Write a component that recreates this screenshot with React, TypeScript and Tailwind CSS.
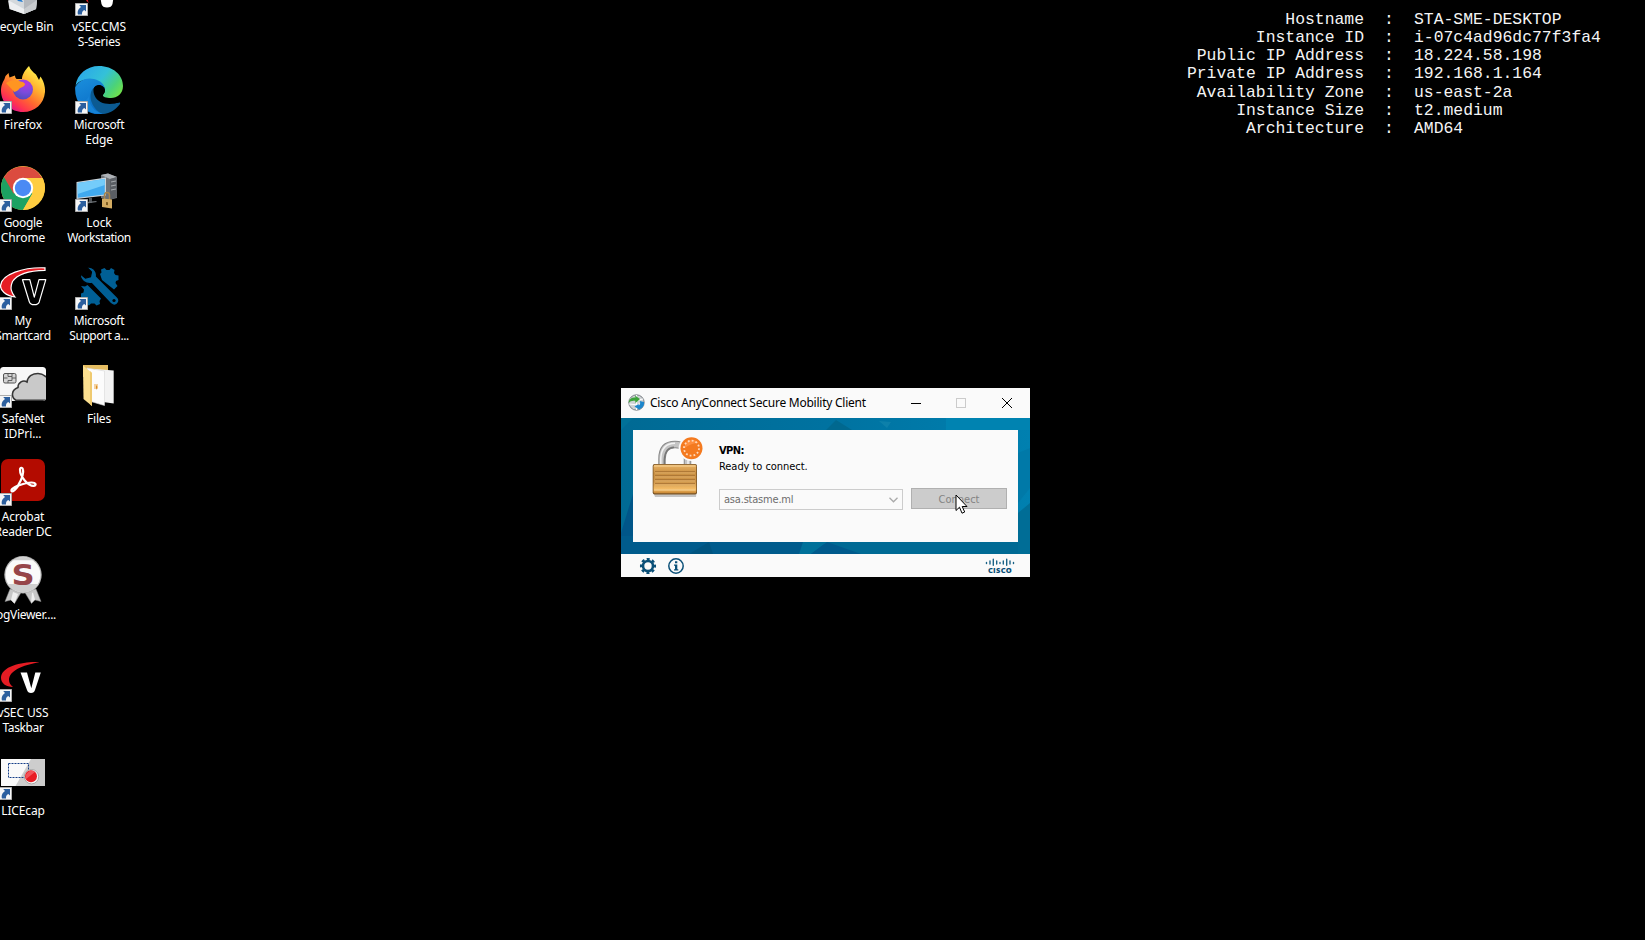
import type { ReactNode } from "react";

const uiFont = "font-['Noto_Sans','Open_Sans',sans-serif]";
const tahoma = "font-['DejaVu_Sans_Condensed','DejaVu_Sans',sans-serif]";

function Glyph({ children }: { children: ReactNode }) {
  return (
    <svg viewBox="0 0 48 48" className="block size-12">
      {children}
    </svg>
  );
}

function ShortcutArrow() {
  return (
    <svg viewBox="0 0 13 13" className="absolute bottom-0 left-0 size-[13px]">
      <rect width="13" height="13" fill="#8f8f8f" />
      <rect x="0.7" y="0.7" width="11.6" height="11.6" fill="#f6f6f6" />
      <path d="M4.200 2h6.800v6.600L9.300 7C7.500 8 6.800 9.200 7 11.600H3C2 8.400 3.500 5.600 6 4z" fill="#2c5f9e" />
    </svg>
  );
}

function RecycleBin() {
  return (
    <Glyph>
      <path d="M7 4h34l-4 37-12 5-14-5z" fill="#d3d8dc" />
      <path d="M25 10l16-5-4 36-12 5z" fill="#b4b8bd" />
      <path d="M9 32l16 9v5L10.500 41z" fill="#eceef0" />
      <path d="M25 41l13-9-1 9-12 5z" fill="#c9cccf" />
      <path d="M15 28l6 2 3 4-5-1z" fill="#1c78d0" />
    </Glyph>
  );
}

function VsecSeries() {
  return (
    <Glyph>
      <path d="M20 26c-9 0-12 6-6 9-3-4 1-7 6-9z" fill="#c8161d" />
      <path d="M22 10h7l3.300 22 3.300-22h6l-4.100 26q-1 3.500-5.500 3.500T26.500 36z" fill="#fff" />
    </Glyph>
  );
}

function Firefox() {
  return (
    <Glyph>
      <defs>
        <linearGradient id="ffBody" x1="0.85" y1="0.1" x2="0.25" y2="0.95">
          <stop offset="0" stopColor="#fff44f" />
          <stop offset="0.35" stopColor="#ffb02e" />
          <stop offset="0.62" stopColor="#ff6a2f" />
          <stop offset="0.85" stopColor="#ff3350" />
          <stop offset="1" stopColor="#e31587" />
        </linearGradient>
        <radialGradient id="ffCore" cx="0.65" cy="0.2" r="0.9">
          <stop offset="0" stopColor="#b833e1" />
          <stop offset="0.5" stopColor="#7b4bdc" />
          <stop offset="1" stopColor="#4a4bb8" />
        </radialGradient>
      </defs>
      <path d="M30 0c1.500 4 4 6 7 8.500L40 14l1.500-3.500C44 14 46.500 20 46 26c-1 12-10 20-22 20S2.300 37 2 25c0-6 2-9 3.500-12l1-3 3-3 1 4.500L16 9.500c0 1.500 .5 2.500 1.500 3.500L23 13c0-4 3-9 7-13z" fill="url(#ffBody)" />
      <circle cx="24" cy="23.500" r="10" fill="url(#ffCore)" />
      <path d="M7 17c4-3 9-3 11-2.500 2.500 1 7 1 8 3.500 0 3-5 3.500-6 5-1 2-4.500 3-4.500 3z" fill="#ff9521" />
    </Glyph>
  );
}

function Edge() {
  return (
    <Glyph>
      <defs>
        <linearGradient id="edgeTop" x1="0" y1="0.2" x2="1" y2="0.75">
          <stop offset="0" stopColor="#2aa6ea" />
          <stop offset="0.5" stopColor="#34c1d8" />
          <stop offset="0.8" stopColor="#4bd27a" />
          <stop offset="1" stopColor="#6fe04c" />
        </linearGradient>
        <linearGradient id="edgeLeft" x1="0" y1="0" x2="0.4" y2="1">
          <stop offset="0" stopColor="#1b8fdc" />
          <stop offset="1" stopColor="#0a6fc8" />
        </linearGradient>
      </defs>
      <path d="M0.500 20C2 8 12 0 24 0c14 0 24 9 24 20 0 8-6 12-12 12-5 0-8.500-1-8-3 .3-1 2-2 2-5 0-4-4-7-9-9C12 12 4 14 .5 20z" fill="url(#edgeTop)" />
      <path d="M.2 21C4 14 12 11 19 13c7 1.500 11 6 11 11-2-6-10-6-12 0-3 9 1 20 12 24-16 3-31-8-29.800-27z" fill="url(#edgeLeft)" />
      <path d="M18.500 22c-6 6-3 20 9 26 8-.500 14-5 17.500-10 .5-1-.3-1.800-1.500-1.200C34 39 21 33 18.500 22z" fill="#0b5a92" />
      <path d="M2 32c4 10 14 17 26 15.700-9-1.700-15-10-14-19-1 7-7 7-12 3.300z" fill="#1683d6" />
      <path d="M30 24c-1-6-10-7-11.500-1-.5 5 2 10 7 13 6 3 14 2 18 .5 1.500-1 2.300-3 3-6.500-4 3-8 3.500-12 3-5 0-7.500-1.500-7-3.500.5-1.500 2.300-2 2.500-5.500z" fill="#000" />
    </Glyph>
  );
}

function Chrome() {
  return (
    <Glyph>
      <circle cx="24" cy="24" r="22" fill="#ffcd41" />
      <path d="M24 24L4.950 13A22 22 0 0 0 24 46L33.500 29.500z" fill="#1da262" />
      <path d="M24 24L14.500 29.500 4.950 13A22 22 0 0 1 43.050 14H24z" fill="#db4b3f" />
      <path d="M24 14h19.500l.8 1.800A22 22 0 0 1 24 46l9.500-16.500z" fill="#ffcd41" />
      <circle cx="24" cy="24" r="10.200" fill="#fff" />
      <circle cx="24" cy="24" r="8.200" fill="#4a8af4" />
    </Glyph>
  );
}

function LockWorkstation() {
  return (
    <Glyph>
      <path d="M26 11l7-1.500 9 3.500v21l-8 2-8-2z" fill="#6d7176" />
      <path d="M26 11l7-1.500 9 3.500-7 2z" fill="#aeb2b6" />
      <path d="M35 15l7-2v20l-7 3z" fill="#5a5e64" />
      <path d="M36 18l5-1M36 22l5-1M36 26l5-1" stroke="#a4a8ac" strokeWidth="1.200" />
      <path d="M14 34h3v5h-3z" fill="#50555a" />
      <path d="M11 38l10-1 1 1-10 1.500z" fill="#6a6f74" />
      <path d="M1.500 18L31 13.500v18L1.500 35z" fill="#c9d3da" />
      <path d="M2.700 19L29.800 14.900v15.600L2.700 33.700z" fill="#40a9ee" />
      <path d="M2.700 19L29.800 14.900v6L2.700 30z" fill="#74ccfa" />
      <path d="M29.500 36v-4.500q0-3 2.500-3t2.500 3V36" fill="none" stroke="#a8854b" strokeWidth="1.500" />
      <path d="M27 34.500l10 1v9l-10-1.500z" fill="#d4ac62" />
      <path d="M31 38l2 .3v3l-2-.3z" fill="#7c5b20" />
    </Glyph>
  );
}

function Smartcard() {
  return (
    <Glyph>
      <path d="M46 8.300C34 8.500 19 11 13.500 19.500c-3 7-1 11 2.500 15.500C6 33.500 1.500 28 1.500 24 2 12 25 5 46 5.800z" fill="#e51c23" stroke="#fff" strokeWidth="1.200" />
      <path d="M23.500 17.700h7.300l4.500 17.500 4.700-17.500h6.800l-6.500 22q-1 3-5 3t-5-3z" fill="#000" stroke="#fff" strokeWidth="1.200" strokeLinejoin="round" />
    </Glyph>
  );
}

function SupportTools() {
  return (
    <Glyph>
      <g fill="#005f95">
        <path d="M25 12l1.500-1.500L26 7.500l3.500-1.500 2 2h3L36 6l3.500 2-.5 3 1.500 2 3 .5v4.500l-2.500 1-.5 2 2 3-3.500 3.500L27 18z" />
        <path d="M6 24l4 .5 2.500-1.500L26 36.500l-1.500 2.500.5 3-3.500 1.500-2-2h-3.500l-2 2-3.500-2 .5-3-2-2.500-3-.5v-4l2.500-1 .5-3z" />
        <path d="M12 5.300c5-1.300 10 3 9.500 9L42.300 35a4.500 4.500 0 0 1-6.300 6.800L16.500 21.500C11 22.500 4.500 18 5.500 12l5 4.200 5-1.500 1-4.700z" stroke="#000" strokeWidth="1.200" />
      </g>
      <circle cx="39" cy="38.500" r="1.600" fill="#000" />
    </Glyph>
  );
}

function SafeNet() {
  return (
    <Glyph>
      <defs>
        <clipPath id="cardClip"><rect x="1" y="7" width="46" height="34" rx="3.500" /></clipPath>
      </defs>
      <rect x="1" y="7" width="46" height="34" rx="3.500" fill="#f7f7f7" />
      <g clipPath="url(#cardClip)">
        <path d="M17 40.300c-5-3-5-10.300 2-12.800 0-5 5-8 9-5.500C29 16 34 13.500 39 13.500c4 0 7 2 10 5v21.800z" fill="#c9c9c9" stroke="#363636" strokeWidth="1.600" />
      </g>
      <rect x="4.500" y="13.500" width="12.500" height="9.500" rx="1.500" fill="#d4d4d4" stroke="#555" strokeWidth="1" />
      <path d="M4.500 18h4M13 18h4M9 13.500v3h4v4H9V23M13 13.500v3" fill="none" stroke="#555" strokeWidth="0.900" />
    </Glyph>
  );
}

function Files() {
  return (
    <Glyph>
      <path d="M8 5h25v12H8z" fill="#e5bd62" />
      <path d="M20 9l18.700 1.500V43.500L28 42z" fill="#f3f3f3" />
      <path d="M12 8l17.500 3v34.500L14 41z" fill="#fcfcfc" stroke="#d8d8d8" strokeWidth="0.600" />
      <path d="M8 5.500L17 13v33L8.500 39z" fill="#fbdf8f" />
      <path d="M17 13v33l-2-1.600V11z" fill="#efca70" />
      <path d="M19 24h4v5h-4z" fill="#f4d2a0" />
      <path d="M21 25l1.500 2-1.500 3z" fill="#d88b23" />
    </Glyph>
  );
}

function Acrobat() {
  return (
    <Glyph>
      <rect x="2" y="1" width="44" height="42" rx="7" fill="#b30b00" />
      <path d="M13 33.500c-2-1 1-4 6-6 3-5 6-12 5-16-.5-2.500-3-2.200-3 .3 0 7 8 16 13.500 16 3.500-.3 2.500-3.300-2-3.300-5 0-9 1.500-13 3-3 4-5 6.500-6.500 6z" fill="none" stroke="#fff" strokeWidth="2.200" strokeLinejoin="round" />
    </Glyph>
  );
}

function LogViewer() {
  return (
    <Glyph>
      <path d="M11 33l-5 12.500 6-1.500 3.500 3.500L23 35zM37 33l5 12.500-6-1.500-3.500 3.500L25 35z" fill="#c6c6c6" stroke="#888" strokeWidth="0.500" />
      <path d="M14 36l-2 8 3.500 3.500L19 38zM33 37l-1 10 4-3.500-2-7z" fill="#eee" />
      <circle cx="24" cy="18.800" r="18.700" fill="#b9b9b9" />
      <circle cx="24" cy="18.800" r="17.500" fill="#fafafa" />
      <path d="M14 4.200a17.500 17.500 0 0 1 20 0zM9 28h30A17.500 17.500 0 0 1 24 36.300 17.500 17.500 0 0 1 9 28z" fill="#cfcfcf" />
    </Glyph>
  );
}

function VsecUss() {
  return (
    <Glyph>
      <path d="M40.500 8.200C28 7 2 11 2 24c0 5 5 9 12 9-3-2-4-5-4-7 0-9 13-15 30.500-17.800z" fill="#e51c23" />
      <path d="M21.500 18.500H28l4.300 15.700 4-15.700h5.500L36 36q-.8 3-4 3t-4-3z" fill="#fff" />
    </Glyph>
  );
}

function Licecap() {
  return (
    <Glyph>
      <rect x="2" y="7" width="44" height="27" fill="#cdcdcd" />
      <path d="M2 7h30L16.500 34H2z" fill="#fafafa" />
      <rect x="9.500" y="11.500" width="20" height="14" fill="none" stroke="#153e88" strokeWidth="1" strokeDasharray="2 1" />
      <circle cx="32.500" cy="24.700" r="7.200" fill="#f5f5f5" stroke="#999" strokeWidth="0.800" />
      <circle cx="32" cy="24.200" r="6" fill="#e81c23" />
      <path d="M27 27a6 6 0 0 1 9-7z" fill="#f26266" opacity="0.800" />
    </Glyph>
  );
}

type Item = { icon: ReactNode; lines: [string, string][]; shortcut?: boolean; mark?: string };

const firstColumn: Item[] = [
  { icon: <RecycleBin />, lines: [["Recycle Bin", "tracking-[-0.2px]"]] },
  { icon: <Firefox />, lines: [["Firefox", ""]], shortcut: true },
  { icon: <Chrome />, lines: [["Google", "tracking-[-0.3px]"], ["Chrome", "tracking-[-0.1px]"]], shortcut: true },
  { icon: <Smartcard />, lines: [["My", ""], ["Smartcard", "tracking-[-0.3px]"]], shortcut: true },
  { icon: <SafeNet />, lines: [["SafeNet", "tracking-[-0.3px]"], ["IDPri...", "tracking-[-0.1px]"]], shortcut: true },
  { icon: <Acrobat />, lines: [["Acrobat", "tracking-[-0.2px]"], ["Reader DC", "tracking-[-0.3px]"]], shortcut: true },
  { icon: <LogViewer />, lines: [["LogViewer....", "tracking-[-0.3px]"]], mark: "S" },
  { icon: <VsecUss />, lines: [["vSEC USS", "tracking-[-0.1px]"], ["Taskbar", "tracking-[-0.35px]"]], shortcut: true },
  { icon: <Licecap />, lines: [["LICEcap", "tracking-[-0.15px]"]], shortcut: true },
];

const secondColumn: Item[] = [
  { icon: <VsecSeries />, lines: [["vSEC.CMS", "tracking-[-0.1px]"], ["S-Series", "tracking-[-0.25px]"]], shortcut: true },
  { icon: <Edge />, lines: [["Microsoft", "tracking-[-0.3px]"], ["Edge", "tracking-[-0.15px]"]], shortcut: true },
  { icon: <LockWorkstation />, lines: [["Lock", "tracking-[-0.1px]"], ["Workstation", "tracking-[-0.45px]"]], shortcut: true },
  { icon: <SupportTools />, lines: [["Microsoft", "tracking-[-0.3px]"], ["Support a...", "tracking-[-0.45px]"]], shortcut: true },
  { icon: <Files />, lines: [["Files", "tracking-[-0.2px]"]] },
];

function DesktopColumn({ items }: { items: Item[] }) {
  return (
    <div className="flex w-19 flex-col">
      {items.map((item, i) => (
        <div key={i} className="flex h-[98px] flex-col items-center">
          <div className="relative size-12 shrink-0">
            {item.icon}
            {item.mark && (
              <span className="absolute inset-x-0 top-[5px] scale-x-115 text-center font-['DejaVu_Sans',sans-serif] text-[28px] leading-[30px] font-bold text-[#964549]">
                {item.mark}
              </span>
            )}
            {item.shortcut && <ShortcutArrow />}
          </div>
          <div className={`mt-[3px] flex flex-col items-center text-[12px] leading-[15px] whitespace-nowrap text-white ${uiFont}`}>
            {item.lines.map(([text, tracking]) => (
              <span key={text} className={tracking}>{text}</span>
            ))}
          </div>
        </div>
      ))}
    </div>
  );
}

const hostInfo = [
  ["Hostname", "STA-SME-DESKTOP"],
  ["Instance ID", "i-07c4ad96dc77f3fa4"],
  ["Public IP Address", "18.224.58.198"],
  ["Private IP Address", "192.168.1.164"],
  ["Availability Zone", "us-east-2a"],
  ["Instance Size", "t2.medium"],
  ["Architecture", "AMD64"],
];

function HostInfo() {
  return (
    <div className="mt-[11px] mr-[31px] grid grid-cols-[182px_50px_200px] content-start font-['Liberation_Mono',monospace] text-[16.4px] leading-[18.15px] text-[#f4f4f4]">
      {hostInfo.map(([name, value]) => (
        <div key={name} className="contents">
          <span className="text-right whitespace-nowrap">{name}</span>
          <span className="text-center">:</span>
          <span className="whitespace-nowrap">{value}</span>
        </div>
      ))}
    </div>
  );
}

function GlobeIcon() {
  return (
    <svg viewBox="0 0 17 17" className="size-[17px]">
      <circle cx="8.500" cy="8.500" r="7.700" fill="#cfd3d6" stroke="#6f7579" strokeWidth="0.900" />
      <path d="M2 5Q8 8 15 5M8.500 1v15M1 10q7 2 15-1" fill="none" stroke="#fff" strokeWidth="1" />
      <path d="M.5 9C1 5 4 3.200 7.500 3.700L7 1.500l5 3.500-4.500 4-.3-2.200C4.500 6.300 2.300 7 .5 9z" fill="#3da33a" />
      <path d="M16 8c.5 3.500-1.500 6.300-4.500 7l.2 1L6.500 12.500l4-2.500.3 1.500c1.500-1 1.700-2.500 1-4.500z" fill="#1c86cc" />
    </svg>
  );
}

function PadlockIcon() {
  return (
    <svg viewBox="0 0 54 64" className="h-16 w-[54px]">
      <defs>
        <linearGradient id="brass" x1="0" y1="0" x2="0" y2="1">
          <stop offset="0" stopColor="#e9b264" />
          <stop offset="0.3" stopColor="#c98f42" />
          <stop offset="0.6" stopColor="#cf964a" />
          <stop offset="0.85" stopColor="#f4bd68" />
          <stop offset="1" stopColor="#c68431" />
        </linearGradient>
      </defs>
      <path d="M11 28V22Q11 7.500 24 7.500T36.500 22v6" fill="none" stroke="#8a8a8a" strokeWidth="7.500" />
      <path d="M11 28V22Q11 7.500 24 7.500T36.500 22v6" fill="none" stroke="#c4c4c4" strokeWidth="5.500" />
      <path d="M9.800 28V21Q10.500 6.500 24 6.200M37 22v6" fill="none" stroke="#f3f3f3" strokeWidth="1.500" />
      <path d="M13.300 28V23Q14 10.500 23 10.200" fill="none" stroke="#777" strokeWidth="1.500" />
      <path d="M2.500 56h43l-.5 4H4z" fill="#c4c4c4" />
      <rect x="1.700" y="27" width="44.300" height="30.500" rx="2" fill="#7a5527" />
      <rect x="2.500" y="27.800" width="42.700" height="28.500" rx="1.500" fill="url(#brass)" />
      <path d="M3 29h41.500M3 53h41.500" stroke="#f8d69a" strokeWidth="1.200" />
      <path d="M4 34.500h40M4 38.500h40M4 42.500h40M4 46.500h40" stroke="#a67132" strokeWidth="0.800" />
      <path d="M4 36h40M4 40h40M4 44h40M4 48h40" stroke="#e2b472" strokeWidth="0.800" />
      <circle cx="40.500" cy="11.200" r="12.800" fill="#fafafa" />
      <circle cx="40.500" cy="11.200" r="11" fill="#f47a1f" />
      <path d="M34 5.500Q41 0 48 6q-8 0-14 5z" fill="#ff8f3e" />
      <circle cx="40.500" cy="11.200" r="7.500" fill="none" stroke="#ffd9bb" strokeWidth="1.800" strokeDasharray="1.800 2.127" />
    </svg>
  );
}

function GearIcon() {
  return (
    <svg viewBox="0 0 18 18" className="size-[18px]" fill="none" stroke="#0b5078">
      <circle cx="9" cy="9" r="5" strokeWidth="2.600" />
      <circle cx="9" cy="9" r="6.900" strokeWidth="2.300" strokeDasharray="3 2.419" strokeDashoffset="1.500" />
    </svg>
  );
}

function InfoIcon() {
  return (
    <svg viewBox="0 0 18 18" className="size-[18px]">
      <circle cx="9" cy="9" r="7.200" fill="none" stroke="#0b5078" strokeWidth="1.500" />
      <path d="M8 4.300h2.300v2H8zM7 7.500h3.300v4.700h1v1.300H7v-1.300h1V8.800H7z" fill="#0b5078" />
    </svg>
  );
}

function CiscoLogo() {
  return (
    <div className="flex w-[30px] flex-col items-center">
      <svg viewBox="0 0 30 9" className="h-[9px] w-[30px]" stroke="#1b6387" strokeWidth="1.400" strokeLinecap="round">
        <path d="M1.500 4.500v1M5 3v3M8.300 1.200v6M11.700 3v3M15 4.500v1M18.300 3v3M21.700 1.200v6M25 3v3M28.500 4.500v1" />
      </svg>
      <span className="font-['Open_Sans',sans-serif] text-[7.500px] leading-[7px] font-extrabold tracking-[0.300px] text-[#0b5078]">CISCO</span>
    </div>
  );
}

function Backdrop() {
  return (
    <svg viewBox="0 0 409 136" preserveAspectRatio="none" className="absolute inset-0 size-full">
      <defs>
        <linearGradient id="sea" x1="0" y1="0" x2="1" y2="0">
          <stop offset="0" stopColor="#006a94" />
          <stop offset="0.5" stopColor="#0072a0" />
          <stop offset="1" stopColor="#0080b0" />
        </linearGradient>
      </defs>
      <rect width="409" height="136" fill="url(#sea)" />
      <path d="M0 12L12 0H0z" fill="#007198" />
      <path d="M0 115L12 76V136H0z" fill="#005689" />
      <path d="M0 118H180L230 136H0z" fill="#005b8c" />
      <path d="M68 136L88 124l4 12z" fill="#005480" />
      <path d="M178 136l4-12h24l-16 12z" fill="#00719a" />
      <path d="M205 124h204v12H230z" fill="#006a94" />
      <path d="M190 136l16-12 34 12z" fill="#005a8c" />
      <path d="M397 95l12-10v51h-12z" fill="#006d96" />
      <path d="M397 35l12-5v40l-12 15z" fill="#0079a8" />
      <path d="M205 12l10-10 16 10z" fill="#00688f" />
      <path d="M258 3l12 1-4 6z" fill="#0d80aa" />
      <path d="M325 0h84v12h-84z" fill="#0083b1" />
    </svg>
  );
}

function VpnWindow() {
  return (
    <div className="flex h-[189px] w-[409px] flex-col bg-[#fafafa]">
      <div className="flex h-[30px] items-center pr-[17px] pb-px pl-[7px]">
        <GlobeIcon />
        <span className={`ml-[5px] flex-1 pt-px text-[12px] tracking-[-0.24px] whitespace-nowrap text-black ${uiFont}`}>Cisco AnyConnect Secure Mobility Client</span>
        <svg viewBox="0 0 102 12" className="h-3 w-[102px]" fill="none" shapeRendering="crispEdges">
          <path d="M0 6.500h10" stroke="#000" />
          <rect x="45.500" y="1.500" width="9" height="9" stroke="#cbcbcb" />
          <path d="M91 1l10 10M101 1L91 11" stroke="#000" shapeRendering="auto" />
        </svg>
      </div>
      <div className="relative h-[136px] p-3">
        <Backdrop />
        <div className="relative flex h-28 bg-[#fafafa] pt-[7px] pl-[18px]">
          <PadlockIcon />
          <div className={`ml-[13px] flex w-[290px] flex-col text-[11px] text-black ${tahoma}`}>
            <span className="mt-[6px] ml-px leading-4 font-bold tracking-[-0.6px]">VPN:</span>
            <span className="ml-px leading-4 tracking-[-0.05px]">Ready to connect.</span>
            <div className="mt-[13px] ml-px flex gap-2">
              <div className="mt-px flex h-[21px] w-[184px] items-center justify-between border border-[#cccccc] pr-1 pl-1 text-[#6d6d6d]">
                <span className="pt-px tracking-[-0.2px]">asa.stasme.ml</span>
                <svg viewBox="0 0 9 6" className="h-1.5 w-[9px]" fill="none" stroke="#a9a9a9" strokeWidth="1.300">
                  <path d="M.5.8l4 4 4-4" />
                </svg>
              </div>
              <button className="relative h-[21px] w-24 border border-[#b0b0b0] bg-[#cccccc] text-center leading-[21px] text-[#838383]">
                Connect
                <svg viewBox="0 0 13 21" className="absolute top-[5px] left-[43px] h-[21px] w-[13px]">
                  <path d="M1 1v15.500l3.500-3.300 2.500 6 2.700-1.200-2.500-5.500h4.800z" fill="#fff" stroke="#000" strokeWidth="1" />
                </svg>
              </button>
            </div>
          </div>
        </div>
      </div>
      <div className="flex h-[23px] items-center pr-[15px] pl-[18px]">
        <GearIcon />
        <span className="ml-[10px] flex-1"><InfoIcon /></span>
        <CiscoLogo />
      </div>
    </div>
  );
}

export default function App() {
  return (
    <div className="grid h-[940px] w-[1645px] grid-cols-[621px_409px_615px] overflow-hidden bg-black">
      <div className="-mt-8 -ml-[15px] flex">
        <DesktopColumn items={firstColumn} />
        <DesktopColumn items={secondColumn} />
      </div>
      <div className="pt-[388px]">
        <VpnWindow />
      </div>
      <div className="flex justify-end">
        <HostInfo />
      </div>
    </div>
  );
}
